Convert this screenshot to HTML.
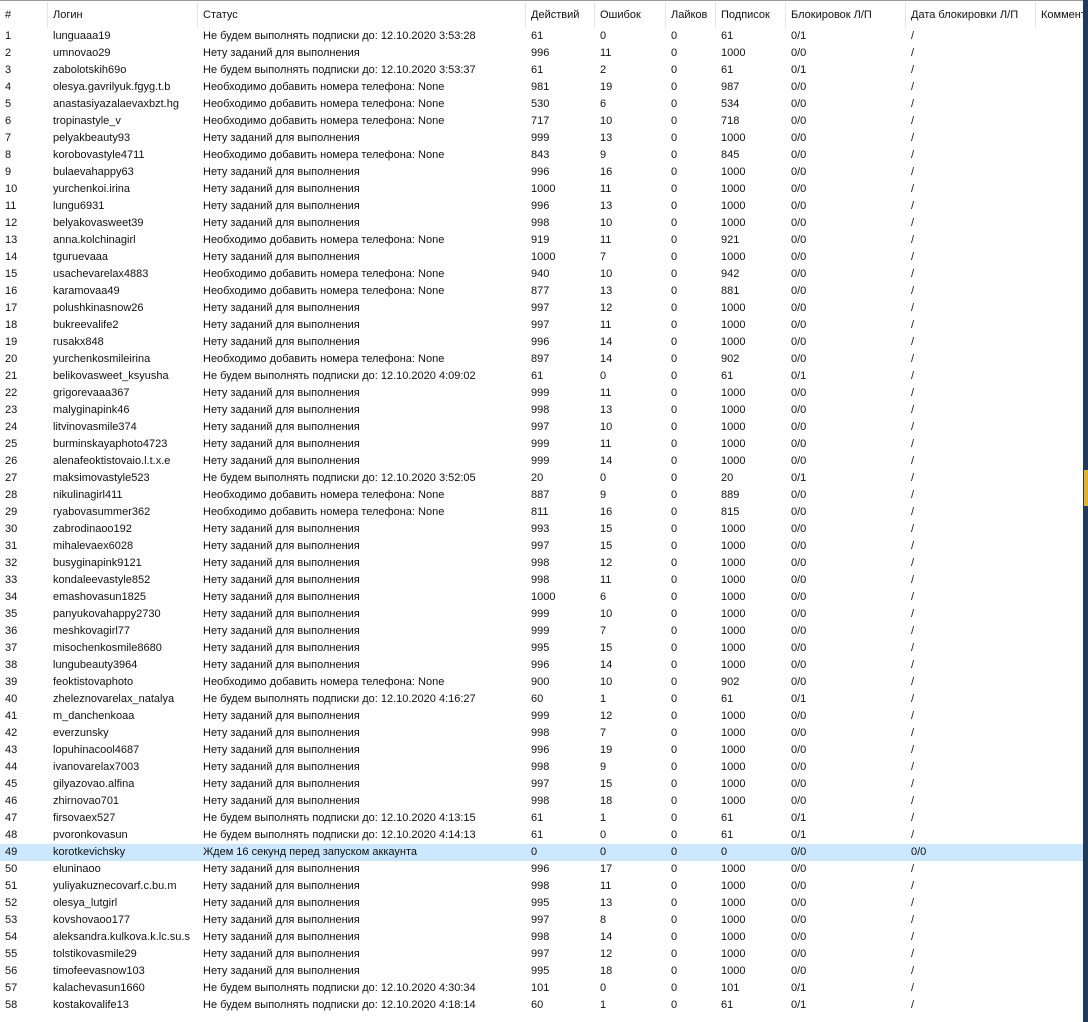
<!DOCTYPE html>
<html><head><meta charset="utf-8"><style>
body{margin:0;width:1088px;height:1022px;background:#fff;overflow:hidden;font-family:"Liberation Sans","DejaVu Sans",sans-serif;font-size:11px;color:#111;position:relative}
.hd{position:absolute;left:0;top:0;width:1088px;height:27px;background:#fff;border-top:1px solid #9a9a9a;box-sizing:border-box}
.hd span{position:absolute;top:8px;height:19px}
.sep{position:absolute;top:1px;width:1px;height:26px;background:#e6e6e6}
table{position:absolute;left:0;top:28px;border-collapse:collapse;table-layout:fixed;width:1083px}
td{height:17px;padding:0;white-space:nowrap;overflow:hidden;line-height:17px}
td:nth-child(1){padding-left:5px}
tr.h td{background:#cce8ff}
.strip{position:absolute;left:1083px;top:0;width:5px;height:1022px;background:#1f3a5c}
.y{position:absolute;left:1084px;top:470px;width:4px;height:36px;background:#e0b030}
</style></head><body>
<div class="hd">
<span style="left:5px">#</span><span style="left:53px">Логин</span><span style="left:203px">Статус</span><span style="left:531px">Действий</span><span style="left:600px">Ошибок</span><span style="left:671px">Лайков</span><span style="left:721px">Подписок</span><span style="left:791px">Блокировок Л/П</span><span style="left:911px">Дата блокировки Л/П</span><span style="left:1041px">Коммент</span>
<div class="sep" style="left:47px"></div><div class="sep" style="left:197px"></div><div class="sep" style="left:525px"></div><div class="sep" style="left:594px"></div><div class="sep" style="left:665px"></div><div class="sep" style="left:715px"></div><div class="sep" style="left:785px"></div><div class="sep" style="left:905px"></div><div class="sep" style="left:1035px"></div>
</div>
<table>
<colgroup><col style="width:53px"><col style="width:150px"><col style="width:328px"><col style="width:69px"><col style="width:71px"><col style="width:50px"><col style="width:70px"><col style="width:120px"><col style="width:130px"><col style="width:42px"></colgroup>
<tbody>
<tr><td>1</td><td>lunguaaa19</td><td>Не будем выполнять подписки до: 12.10.2020 3:53:28</td><td>61</td><td>0</td><td>0</td><td>61</td><td>0/1</td><td>/</td><td></td></tr>
<tr><td>2</td><td>umnovao29</td><td>Нету заданий для выполнения</td><td>996</td><td>11</td><td>0</td><td>1000</td><td>0/0</td><td>/</td><td></td></tr>
<tr><td>3</td><td>zabolotskih69o</td><td>Не будем выполнять подписки до: 12.10.2020 3:53:37</td><td>61</td><td>2</td><td>0</td><td>61</td><td>0/1</td><td>/</td><td></td></tr>
<tr><td>4</td><td>olesya.gavrilyuk.fgyg.t.b</td><td>Необходимо добавить номера телефона: None</td><td>981</td><td>19</td><td>0</td><td>987</td><td>0/0</td><td>/</td><td></td></tr>
<tr><td>5</td><td>anastasiyazalaevaxbzt.hg</td><td>Необходимо добавить номера телефона: None</td><td>530</td><td>6</td><td>0</td><td>534</td><td>0/0</td><td>/</td><td></td></tr>
<tr><td>6</td><td>tropinastyle_v</td><td>Необходимо добавить номера телефона: None</td><td>717</td><td>10</td><td>0</td><td>718</td><td>0/0</td><td>/</td><td></td></tr>
<tr><td>7</td><td>pelyakbeauty93</td><td>Нету заданий для выполнения</td><td>999</td><td>13</td><td>0</td><td>1000</td><td>0/0</td><td>/</td><td></td></tr>
<tr><td>8</td><td>korobovastyle4711</td><td>Необходимо добавить номера телефона: None</td><td>843</td><td>9</td><td>0</td><td>845</td><td>0/0</td><td>/</td><td></td></tr>
<tr><td>9</td><td>bulaevahappy63</td><td>Нету заданий для выполнения</td><td>996</td><td>16</td><td>0</td><td>1000</td><td>0/0</td><td>/</td><td></td></tr>
<tr><td>10</td><td>yurchenkoi.irina</td><td>Нету заданий для выполнения</td><td>1000</td><td>11</td><td>0</td><td>1000</td><td>0/0</td><td>/</td><td></td></tr>
<tr><td>11</td><td>lungu6931</td><td>Нету заданий для выполнения</td><td>996</td><td>13</td><td>0</td><td>1000</td><td>0/0</td><td>/</td><td></td></tr>
<tr><td>12</td><td>belyakovasweet39</td><td>Нету заданий для выполнения</td><td>998</td><td>10</td><td>0</td><td>1000</td><td>0/0</td><td>/</td><td></td></tr>
<tr><td>13</td><td>anna.kolchinagirl</td><td>Необходимо добавить номера телефона: None</td><td>919</td><td>11</td><td>0</td><td>921</td><td>0/0</td><td>/</td><td></td></tr>
<tr><td>14</td><td>tguruevaaa</td><td>Нету заданий для выполнения</td><td>1000</td><td>7</td><td>0</td><td>1000</td><td>0/0</td><td>/</td><td></td></tr>
<tr><td>15</td><td>usachevarelax4883</td><td>Необходимо добавить номера телефона: None</td><td>940</td><td>10</td><td>0</td><td>942</td><td>0/0</td><td>/</td><td></td></tr>
<tr><td>16</td><td>karamovaa49</td><td>Необходимо добавить номера телефона: None</td><td>877</td><td>13</td><td>0</td><td>881</td><td>0/0</td><td>/</td><td></td></tr>
<tr><td>17</td><td>polushkinasnow26</td><td>Нету заданий для выполнения</td><td>997</td><td>12</td><td>0</td><td>1000</td><td>0/0</td><td>/</td><td></td></tr>
<tr><td>18</td><td>bukreevalife2</td><td>Нету заданий для выполнения</td><td>997</td><td>11</td><td>0</td><td>1000</td><td>0/0</td><td>/</td><td></td></tr>
<tr><td>19</td><td>rusakx848</td><td>Нету заданий для выполнения</td><td>996</td><td>14</td><td>0</td><td>1000</td><td>0/0</td><td>/</td><td></td></tr>
<tr><td>20</td><td>yurchenkosmileirina</td><td>Необходимо добавить номера телефона: None</td><td>897</td><td>14</td><td>0</td><td>902</td><td>0/0</td><td>/</td><td></td></tr>
<tr><td>21</td><td>belikovasweet_ksyusha</td><td>Не будем выполнять подписки до: 12.10.2020 4:09:02</td><td>61</td><td>0</td><td>0</td><td>61</td><td>0/1</td><td>/</td><td></td></tr>
<tr><td>22</td><td>grigorevaaa367</td><td>Нету заданий для выполнения</td><td>999</td><td>11</td><td>0</td><td>1000</td><td>0/0</td><td>/</td><td></td></tr>
<tr><td>23</td><td>malyginapink46</td><td>Нету заданий для выполнения</td><td>998</td><td>13</td><td>0</td><td>1000</td><td>0/0</td><td>/</td><td></td></tr>
<tr><td>24</td><td>litvinovasmile374</td><td>Нету заданий для выполнения</td><td>997</td><td>10</td><td>0</td><td>1000</td><td>0/0</td><td>/</td><td></td></tr>
<tr><td>25</td><td>burminskayaphoto4723</td><td>Нету заданий для выполнения</td><td>999</td><td>11</td><td>0</td><td>1000</td><td>0/0</td><td>/</td><td></td></tr>
<tr><td>26</td><td>alenafeoktistovaio.l.t.x.e</td><td>Нету заданий для выполнения</td><td>999</td><td>14</td><td>0</td><td>1000</td><td>0/0</td><td>/</td><td></td></tr>
<tr><td>27</td><td>maksimovastyle523</td><td>Не будем выполнять подписки до: 12.10.2020 3:52:05</td><td>20</td><td>0</td><td>0</td><td>20</td><td>0/1</td><td>/</td><td></td></tr>
<tr><td>28</td><td>nikulinagirl411</td><td>Необходимо добавить номера телефона: None</td><td>887</td><td>9</td><td>0</td><td>889</td><td>0/0</td><td>/</td><td></td></tr>
<tr><td>29</td><td>ryabovasummer362</td><td>Необходимо добавить номера телефона: None</td><td>811</td><td>16</td><td>0</td><td>815</td><td>0/0</td><td>/</td><td></td></tr>
<tr><td>30</td><td>zabrodinaoo192</td><td>Нету заданий для выполнения</td><td>993</td><td>15</td><td>0</td><td>1000</td><td>0/0</td><td>/</td><td></td></tr>
<tr><td>31</td><td>mihalevaex6028</td><td>Нету заданий для выполнения</td><td>997</td><td>15</td><td>0</td><td>1000</td><td>0/0</td><td>/</td><td></td></tr>
<tr><td>32</td><td>busyginapink9121</td><td>Нету заданий для выполнения</td><td>998</td><td>12</td><td>0</td><td>1000</td><td>0/0</td><td>/</td><td></td></tr>
<tr><td>33</td><td>kondaleevastyle852</td><td>Нету заданий для выполнения</td><td>998</td><td>11</td><td>0</td><td>1000</td><td>0/0</td><td>/</td><td></td></tr>
<tr><td>34</td><td>emashovasun1825</td><td>Нету заданий для выполнения</td><td>1000</td><td>6</td><td>0</td><td>1000</td><td>0/0</td><td>/</td><td></td></tr>
<tr><td>35</td><td>panyukovahappy2730</td><td>Нету заданий для выполнения</td><td>999</td><td>10</td><td>0</td><td>1000</td><td>0/0</td><td>/</td><td></td></tr>
<tr><td>36</td><td>meshkovagirl77</td><td>Нету заданий для выполнения</td><td>999</td><td>7</td><td>0</td><td>1000</td><td>0/0</td><td>/</td><td></td></tr>
<tr><td>37</td><td>misochenkosmile8680</td><td>Нету заданий для выполнения</td><td>995</td><td>15</td><td>0</td><td>1000</td><td>0/0</td><td>/</td><td></td></tr>
<tr><td>38</td><td>lungubeauty3964</td><td>Нету заданий для выполнения</td><td>996</td><td>14</td><td>0</td><td>1000</td><td>0/0</td><td>/</td><td></td></tr>
<tr><td>39</td><td>feoktistovaphoto</td><td>Необходимо добавить номера телефона: None</td><td>900</td><td>10</td><td>0</td><td>902</td><td>0/0</td><td>/</td><td></td></tr>
<tr><td>40</td><td>zheleznovarelax_natalya</td><td>Не будем выполнять подписки до: 12.10.2020 4:16:27</td><td>60</td><td>1</td><td>0</td><td>61</td><td>0/1</td><td>/</td><td></td></tr>
<tr><td>41</td><td>m_danchenkoaa</td><td>Нету заданий для выполнения</td><td>999</td><td>12</td><td>0</td><td>1000</td><td>0/0</td><td>/</td><td></td></tr>
<tr><td>42</td><td>everzunsky</td><td>Нету заданий для выполнения</td><td>998</td><td>7</td><td>0</td><td>1000</td><td>0/0</td><td>/</td><td></td></tr>
<tr><td>43</td><td>lopuhinacool4687</td><td>Нету заданий для выполнения</td><td>996</td><td>19</td><td>0</td><td>1000</td><td>0/0</td><td>/</td><td></td></tr>
<tr><td>44</td><td>ivanovarelax7003</td><td>Нету заданий для выполнения</td><td>998</td><td>9</td><td>0</td><td>1000</td><td>0/0</td><td>/</td><td></td></tr>
<tr><td>45</td><td>gilyazovao.alfina</td><td>Нету заданий для выполнения</td><td>997</td><td>15</td><td>0</td><td>1000</td><td>0/0</td><td>/</td><td></td></tr>
<tr><td>46</td><td>zhirnovao701</td><td>Нету заданий для выполнения</td><td>998</td><td>18</td><td>0</td><td>1000</td><td>0/0</td><td>/</td><td></td></tr>
<tr><td>47</td><td>firsovaex527</td><td>Не будем выполнять подписки до: 12.10.2020 4:13:15</td><td>61</td><td>1</td><td>0</td><td>61</td><td>0/1</td><td>/</td><td></td></tr>
<tr><td>48</td><td>pvoronkovasun</td><td>Не будем выполнять подписки до: 12.10.2020 4:14:13</td><td>61</td><td>0</td><td>0</td><td>61</td><td>0/1</td><td>/</td><td></td></tr>
<tr class="h"><td>49</td><td>korotkevichsky</td><td>Ждем 16 секунд перед запуском аккаунта</td><td>0</td><td>0</td><td>0</td><td>0</td><td>0/0</td><td>0/0</td><td></td></tr>
<tr><td>50</td><td>eluninaoo</td><td>Нету заданий для выполнения</td><td>996</td><td>17</td><td>0</td><td>1000</td><td>0/0</td><td>/</td><td></td></tr>
<tr><td>51</td><td>yuliyakuznecovarf.c.bu.m</td><td>Нету заданий для выполнения</td><td>998</td><td>11</td><td>0</td><td>1000</td><td>0/0</td><td>/</td><td></td></tr>
<tr><td>52</td><td>olesya_lutgirl</td><td>Нету заданий для выполнения</td><td>995</td><td>13</td><td>0</td><td>1000</td><td>0/0</td><td>/</td><td></td></tr>
<tr><td>53</td><td>kovshovaoo177</td><td>Нету заданий для выполнения</td><td>997</td><td>8</td><td>0</td><td>1000</td><td>0/0</td><td>/</td><td></td></tr>
<tr><td>54</td><td>aleksandra.kulkova.k.lc.su.s</td><td>Нету заданий для выполнения</td><td>998</td><td>14</td><td>0</td><td>1000</td><td>0/0</td><td>/</td><td></td></tr>
<tr><td>55</td><td>tolstikovasmile29</td><td>Нету заданий для выполнения</td><td>997</td><td>12</td><td>0</td><td>1000</td><td>0/0</td><td>/</td><td></td></tr>
<tr><td>56</td><td>timofeevasnow103</td><td>Нету заданий для выполнения</td><td>995</td><td>18</td><td>0</td><td>1000</td><td>0/0</td><td>/</td><td></td></tr>
<tr><td>57</td><td>kalachevasun1660</td><td>Не будем выполнять подписки до: 12.10.2020 4:30:34</td><td>101</td><td>0</td><td>0</td><td>101</td><td>0/1</td><td>/</td><td></td></tr>
<tr><td>58</td><td>kostakovalife13</td><td>Не будем выполнять подписки до: 12.10.2020 4:18:14</td><td>60</td><td>1</td><td>0</td><td>61</td><td>0/1</td><td>/</td><td></td></tr>
</tbody></table>
<div class="strip"></div><div class="y"></div>
</body></html>
